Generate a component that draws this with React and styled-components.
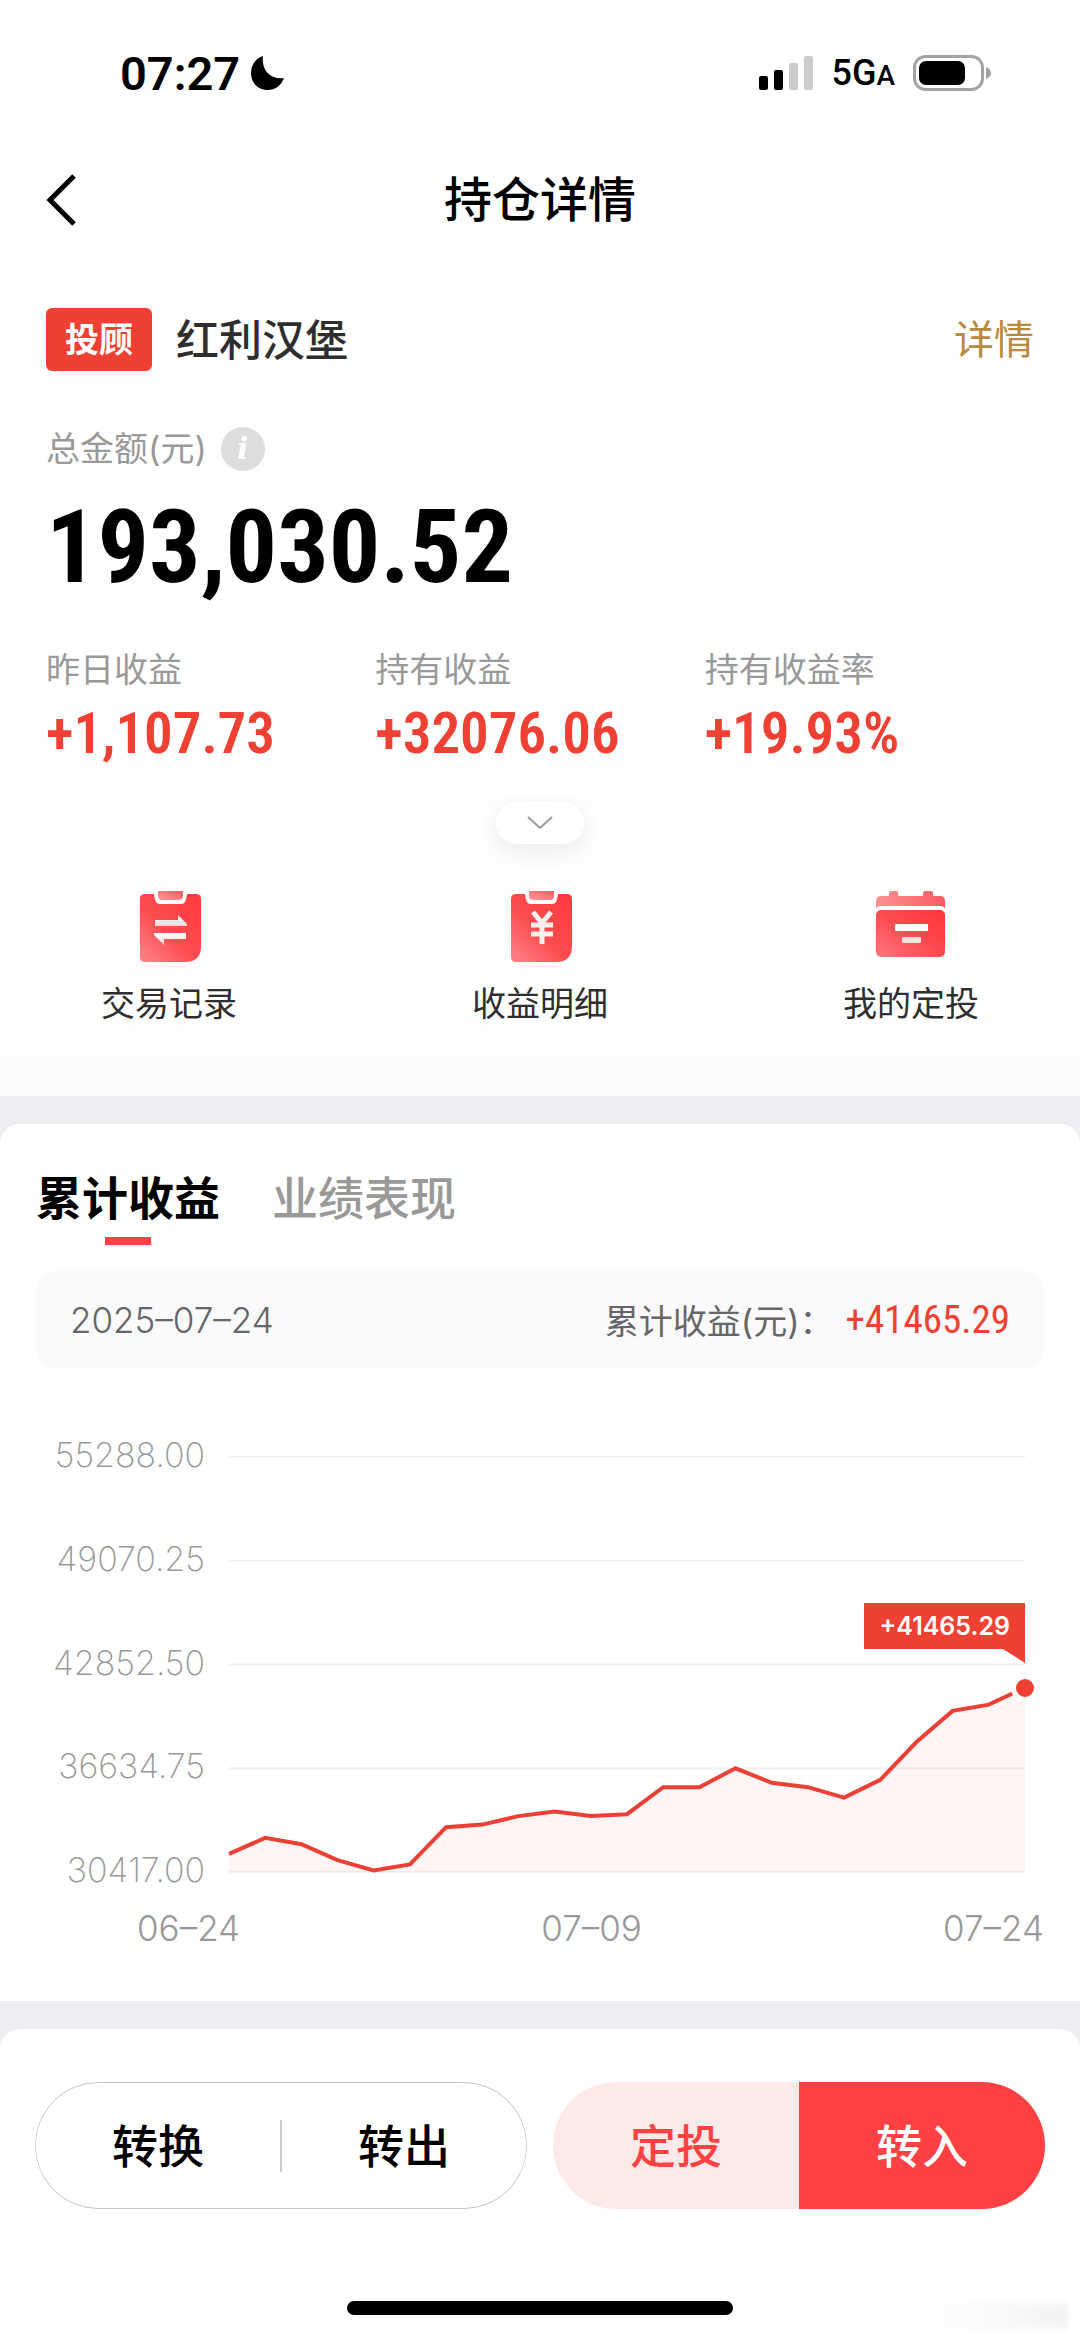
import React from "react";
import styled, { createGlobalStyle } from "styled-components";

const GlobalStyle = createGlobalStyle`
  * {
    box-sizing: border-box;
  }

  body {
    margin: 0;
    background: #eeedf2;
    color: #000;
    font-family: Inter, "Noto Sans CJK SC", sans-serif;
  }

  button {
    padding: 0;
    border: 0;
    background: none;
    color: inherit;
    font: inherit;
    cursor: pointer;
  }
`;

const MAX = 55288;
const MIN = 30417;
const PLOT_WIDTH = 796;
const PLOT_HEIGHT = 415;

const ticks = ["55288.00", "49070.25", "42852.50", "36634.75", "30417.00"];
const dates = ["06–24", "07–09", "07–24"];
const profits = [
  31508, 32461, 32083, 31130, 30512, 30866, 33103, 33259, 33768, 34038, 33768,
  33882, 35501, 35501, 36634, 35765, 35501, 34878, 35945, 38205, 40070, 40448,
  41465.29,
];

const stats = [
  { label: "昨日收益", value: "+1,107.73" },
  { label: "持有收益", value: "+32076.06" },
  { label: "持有收益率", value: "+19.93%" },
];

const toY = (value) => ((MAX - value) / (MAX - MIN)) * PLOT_HEIGHT;

const Clipboard = ({ id, children }) => (
  <svg width="80" height="80" viewBox="0 0 80 80" aria-hidden="true">
    <defs>
      <linearGradient id={id} x1="1" y1="0.1" x2="0.2" y2="1">
        <stop offset="0" stopColor="#fe3b3e" />
        <stop offset="0.6" stopColor="#fd4d51" />
        <stop offset="1" stopColor="#ff7a7f" />
      </linearGradient>
      <linearGradient id={id + "-tab"} x1="1" y1="0" x2="0" y2="1">
        <stop offset="0" stopColor="#fd5a5e" />
        <stop offset="1" stopColor="#ff9a9e" />
      </linearGradient>
      <linearGradient id={id + "-mark"} x1="0" y1="0" x2="0" y2="1">
        <stop offset="0" stopColor="#fff" />
        <stop offset="1" stopColor="#ffd5d6" />
      </linearGradient>
    </defs>
    <path
      d="M16 7H25C26 14 27 17 31 17H52C56 17 57 14 58 7H67Q72 7 72 12V59Q72 75 56 75H16Q11 75 11 70V12Q11 7 16 7Z"
      fill={`url(#${id})`}
    />
    <path d="M29 4H54V9Q54 13 50 13H33Q29 13 29 9Z" fill={`url(#${id}-tab)`} />
    {children}
  </svg>
);

const RecordIcon = () => (
  <Clipboard id="record">
    <path d="M26 33H49V28L58 37V39H26Z" fill="url(#record-mark)" />
    <path d="M25 46H57V52H35V58L25 48Z" fill="url(#record-mark)" />
  </Clipboard>
);

const ProfitIcon = () => (
  <Clipboard id="profit">
    <g stroke="#fff0f0" strokeWidth="5" fill="none">
      <path d="M33 25L42 36L51 25" />
      <path d="M31 38H53M31 47H53M42 36V57" />
    </g>
  </Clipboard>
);

const PlanIcon = () => (
  <svg width="80" height="80" viewBox="0 0 80 80" aria-hidden="true">
    <defs>
      <linearGradient id="plan" x1="1" y1="0" x2="0" y2="1">
        <stop offset="0" stopColor="#fe3538" />
        <stop offset="0.5" stopColor="#fd4b50" />
        <stop offset="1" stopColor="#ff797e" />
      </linearGradient>
      <linearGradient id="plan-top" x1="1" y1="0" x2="0" y2="0">
        <stop offset="0" stopColor="#fc5c61" />
        <stop offset="1" stopColor="#ff9093" />
      </linearGradient>
    </defs>
    <path
      d="M5 22V14Q5 9 10 9H18V6Q18 4 20 4H25Q27 4 27 6V9H52V6Q52 4 54 4H60Q62 4 62 6V9H69Q74 9 74 14V22Q73 19 69 19H10Q6 19 5 22Z"
      fill="url(#plan-top)"
    />
    <rect x="5" y="23" width="69" height="47" rx="5" fill="url(#plan)" />
    <rect x="24" y="37" width="33" height="7" rx="1" fill="#fff" />
    <rect x="31" y="50" width="19" height="6" rx="1" fill="#ffdfe0" />
  </svg>
);

const actions = [
  { label: "交易记录", Icon: RecordIcon },
  { label: "收益明细", Icon: ProfitIcon },
  { label: "我的定投", Icon: PlanIcon },
];

const StatusBar = () => (
  <Status>
    <Clock>
      07:27
      <svg width="36" height="36" viewBox="0 0 36 36" aria-hidden="true">
        <path
          d="M13 1C11 13 19 25 34 23C31 31 25 35 18 35C8 35 1 28 1 18C1 10 6 3 13 1Z"
          fill="#000"
        />
      </svg>
    </Clock>
    <Signals>
      <svg width="54" height="34" viewBox="0 0 54 34" aria-hidden="true">
        <rect x="0" y="20" width="9" height="14" rx="2" />
        <rect x="15" y="14" width="9" height="20" rx="2" />
        <rect x="30" y="7" width="9" height="27" rx="2" fill="#ccc" />
        <rect x="45" y="0" width="9" height="34" rx="2" fill="#ccc" />
      </svg>
      <Network>
        5G<small>A</small>
      </Network>
      <svg width="78" height="36" viewBox="0 0 78 36" aria-hidden="true">
        <rect
          x="1.5"
          y="1.5"
          width="68"
          height="33"
          rx="11"
          fill="none"
          stroke="#a3a3a3"
          strokeWidth="3"
        />
        <rect x="6" y="6" width="46" height="24" rx="7" />
        <path d="M73 12Q78 14 78 18Q78 22 73 24Z" fill="#a3a3a3" />
      </svg>
    </Signals>
  </Status>
);

const Chart = () => {
  const step = PLOT_WIDTH / (profits.length - 1);
  const line = profits
    .map((value, i) => `${(i * step).toFixed(1)},${toY(value).toFixed(1)}`)
    .join(" ");

  return (
    <ChartGrid>
      <YAxis>
        {ticks.map((tick) => (
          <span key={tick}>{tick}</span>
        ))}
      </YAxis>
      <Plot>
        <PlotSvg
          viewBox={`0 0 ${PLOT_WIDTH} ${PLOT_HEIGHT}`}
          preserveAspectRatio="none"
          role="img"
          aria-label="累计收益"
        >
          {ticks.map((tick) => (
            <line
              key={tick}
              x1="0"
              x2={PLOT_WIDTH}
              y1={toY(Number(tick))}
              y2={toY(Number(tick))}
              stroke="#f0f0f1"
              strokeWidth="2"
            />
          ))}
          <polygon
            points={`0,${PLOT_HEIGHT} ${line} ${PLOT_WIDTH},${PLOT_HEIGHT}`}
            fill="#ef4034"
            fillOpacity="0.05"
          />
          <polyline
            points={line}
            fill="none"
            stroke="#ec4036"
            strokeWidth="4"
            vectorEffect="non-scaling-stroke"
          />
        </PlotSvg>
        <Dot style={{ top: toY(profits[profits.length - 1]) }} />
        <Tooltip>+41465.29</Tooltip>
      </Plot>
    </ChartGrid>
  );
};

const App = () => {
  return (
    <Page>
      <GlobalStyle />
      <Summary>
        <StatusBar />
        <NavBar>
          <BackButton aria-label="返回">
            <svg width="32" height="52" viewBox="0 0 32 52" aria-hidden="true">
              <path
                d="M28 2L4 26L28 50"
                fill="none"
                stroke="#000"
                strokeWidth="5"
              />
            </svg>
          </BackButton>
          <Title>持仓详情</Title>
        </NavBar>
        <Product>
          <Tag>投顾</Tag>
          <Name>红利汉堡</Name>
          <DetailLink href="#detail">详情</DetailLink>
        </Product>
        <TotalLabel>
          总金额(元)
          <InfoButton aria-label="说明">i</InfoButton>
        </TotalLabel>
        <Total>193,030.52</Total>
        <Stats>
          {stats.map(({ label, value }) => (
            <div key={label}>
              <StatLabel>{label}</StatLabel>
              <StatValue>{value}</StatValue>
            </div>
          ))}
        </Stats>
        <ExpandButton aria-label="展开">
          <svg width="28" height="16" viewBox="0 0 28 16" aria-hidden="true">
            <path
              d="M2 2L14 13L26 2"
              fill="none"
              stroke="#999"
              strokeWidth="2"
            />
          </svg>
        </ExpandButton>
        <Actions>
          {actions.map(({ label, Icon }) => (
            <ActionButton key={label}>
              <Icon />
              {label}
            </ActionButton>
          ))}
        </Actions>
      </Summary>

      <Performance>
        <Tabs>
          <Tab $active>累计收益</Tab>
          <Tab>业绩表现</Tab>
        </Tabs>
        <Selected>
          <SelectedDate>2025–07–24</SelectedDate>
          <SelectedLabel>累计收益(元)：</SelectedLabel>
          <SelectedValue>+41465.29</SelectedValue>
        </Selected>
        <Chart />
        <XAxis>
          {dates.map((date) => (
            <span key={date}>{date}</span>
          ))}
        </XAxis>
      </Performance>

      <Footer>
        <FooterButtons>
          <OutlinePair>
            <PairButton>转换</PairButton>
            <Divider />
            <PairButton>转出</PairButton>
          </OutlinePair>
          <FilledPair>
            <PairButton $tone="soft">定投</PairButton>
            <PairButton $tone="solid">转入</PairButton>
          </FilledPair>
        </FooterButtons>
        <HomeIndicator />
        <Smudge />
      </Footer>
    </Page>
  );
};

export default App;

const numberFont = `"Roboto Condensed", "Liberation Sans Narrow", Roboto, "Noto Sans CJK SC", sans-serif`;

const Page = styled.div`
  display: flex;
  flex-direction: column;
  gap: 28px;
`;

const Summary = styled.section`
  padding-bottom: 72px;
  background: linear-gradient(#fff, #fff calc(100% - 80px), #fbfbfb);
`;

const Status = styled.div`
  display: flex;
  align-items: center;
  justify-content: space-between;
  height: 146px;
  padding: 0 89px 0 120px;
`;

const Clock = styled.div`
  display: flex;
  align-items: center;
  gap: 10px;
  font-family: Roboto, sans-serif;
  font-size: 47px;
  font-weight: 600;
`;

const Signals = styled.div`
  display: flex;
  align-items: center;
  gap: 18px;
`;

const Network = styled.span`
  font-family: Roboto, sans-serif;
  font-size: 36px;
  font-weight: 500;

  small {
    font-size: 28px;
  }
`;

const NavBar = styled.header`
  display: grid;
  grid-template-columns: 1fr auto 1fr;
  align-items: center;
  height: 107px;
  padding: 0 46px;
`;

const BackButton = styled.button`
  display: flex;
  justify-self: start;
`;

const Title = styled.h1`
  margin: 0;
  font-size: 48px;
  font-weight: 500;
  line-height: 56px;
`;

const Product = styled.div`
  display: flex;
  align-items: center;
  gap: 24px;
  height: 63px;
  margin-top: 55px;
  padding: 0 46px;
`;

const Tag = styled.span`
  padding: 0 19px;
  border-radius: 6px;
  background: #ef4034;
  color: #fff;
  font-size: 34px;
  font-weight: 700;
  line-height: 63px;
`;

const Name = styled.h2`
  margin: 0;
  color: #2e2e2e;
  font-size: 43px;
  font-weight: 500;
  line-height: 56px;
`;

const DetailLink = styled.a`
  margin-left: auto;
  color: #b98941;
  font-size: 40px;
  line-height: 56px;
  text-decoration: none;
`;

const TotalLabel = styled.div`
  display: flex;
  align-items: center;
  gap: 14px;
  margin-top: 56px;
  padding: 0 46px;
  color: #999;
  font-size: 34px;
  line-height: 44px;
`;

const InfoButton = styled.button`
  width: 44px;
  height: 44px;
  border-radius: 50%;
  background: #ddd;
  color: #fff;
  font-family: "DejaVu Serif", serif;
  font-size: 30px;
  font-style: italic;
  font-weight: 700;
  line-height: 44px;
`;

const Total = styled.div`
  margin-top: 26px;
  padding: 0 46px;
  font-family: ${numberFont};
  font-size: 102px;
  font-weight: 700;
  line-height: 100px;
`;

const Stats = styled.div`
  display: grid;
  grid-template-columns: repeat(3, 1fr);
  margin-top: 53px;
  padding: 0 46px;
`;

const StatLabel = styled.div`
  color: #999;
  font-size: 34px;
  line-height: 40px;
`;

const StatValue = styled.div`
  margin-top: 16px;
  color: #ef4034;
  font-family: ${numberFont};
  font-size: 57px;
  font-weight: 600;
  line-height: 56px;
`;

const ExpandButton = styled.button`
  display: flex;
  align-items: center;
  justify-content: center;
  width: 88px;
  height: 42px;
  margin: 40px auto 0;
  border-radius: 21px;
  background: #fff;
  box-shadow: 0 6px 24px rgba(80, 60, 40, 0.12);
`;

const Actions = styled.div`
  display: flex;
  justify-content: space-between;
  margin-top: 43px;
  padding: 0 101px;
`;

const ActionButton = styled.button`
  display: flex;
  flex-direction: column;
  align-items: center;
  gap: 17px;
  color: #2e2e2e;
  font-size: 34px;
  line-height: 40px;
`;

const Performance = styled.section`
  padding: 50px 36px 53px;
  border-radius: 20px 20px 0 0;
  background: #fff;
`;

const Tabs = styled.div`
  display: flex;
  gap: 52px;
`;

const Tab = styled.button`
  display: flex;
  flex-direction: column;
  align-items: center;
  gap: 15px;
  color: ${(props) => (props.$active ? "#000" : "#999")};
  font-size: 46px;
  font-weight: ${(props) => (props.$active ? 700 : 500)};
  line-height: 48px;

  &::after {
    content: "";
    width: 46px;
    height: 8px;
    background: ${(props) => (props.$active ? "#ff4144" : "transparent")};
  }
`;

const Selected = styled.div`
  display: flex;
  align-items: center;
  height: 97px;
  margin-top: 26px;
  padding: 0 34px;
  border-radius: 20px;
  background: #fafafc;
  color: #666;
  font-size: 34px;
`;

const SelectedDate = styled.span`
  font-size: 35px;
  font-weight: 300;
`;

const SelectedLabel = styled.span`
  margin-left: auto;
`;

const SelectedValue = styled.span`
  margin-left: 12px;
  color: #ef4034;
  font-family: ${numberFont};
  font-size: 39px;
`;

const ChartGrid = styled.div`
  display: flex;
  gap: 24px;
  margin-top: 70px;
  padding-right: 19px;
`;

const YAxis = styled.div`
  display: flex;
  flex-direction: column;
  justify-content: space-between;
  width: 169px;
  color: #999;
  font-size: 34px;
  font-weight: 200;
  line-height: 34px;
  text-align: right;
`;

const Plot = styled.div`
  position: relative;
  flex: 1;
  height: 415px;
  margin: 19px 0 15px;
`;

const PlotSvg = styled.svg`
  display: block;
  width: 100%;
  height: 100%;
  overflow: visible;
`;

const Dot = styled.span`
  position: absolute;
  right: -14px;
  width: 28px;
  height: 28px;
  margin-top: -14px;
  border: 5px solid #fff;
  border-radius: 50%;
  background: #ef4034;
`;

const Tooltip = styled.div`
  position: absolute;
  top: 146px;
  right: 0;
  padding: 0 15px;
  background: #ef4034;
  color: #fff;
  font-size: 25px;
  font-weight: 600;
  line-height: 46px;

  &::after {
    content: "";
    position: absolute;
    top: 100%;
    right: 0;
    border-top: 14px solid #ef4034;
    border-left: 22px solid transparent;
  }
`;

const XAxis = styled.div`
  display: flex;
  justify-content: space-between;
  margin-top: 21px;
  padding-left: 101px;
  color: #999;
  font-size: 35px;
  font-weight: 300;
  line-height: 40px;
`;

const Footer = styled.footer`
  position: relative;
  padding: 53px 35px 24px;
  border-radius: 20px 20px 0 0;
  background: #fff;
`;

const FooterButtons = styled.div`
  display: grid;
  grid-template-columns: 1fr 1fr;
  gap: 26px;
`;

const Pair = styled.div`
  display: flex;
  align-items: center;
  height: 127px;
  border-radius: 64px;
  overflow: hidden;
`;

const OutlinePair = styled(Pair)`
  border: 1px solid #c4c4c4;
`;

const FilledPair = styled(Pair)`
  align-items: stretch;
`;

const PairButton = styled.button`
  flex: 1;
  background: ${({ $tone }) =>
    $tone === "solid" ? "#ff4144" : $tone === "soft" ? "#fceae8" : "#fff"};
  color: ${({ $tone }) =>
    $tone === "solid" ? "#fff" : $tone === "soft" ? "#ff4144" : "#000"};
  font-size: 46px;
  font-weight: 500;
  line-height: 56px;
`;

const Divider = styled.span`
  width: 2px;
  height: 52px;
  background: #ccc;
`;

const HomeIndicator = styled.div`
  width: 386px;
  height: 14px;
  margin: 92px auto 0;
  border-radius: 7px;
  background: #000;
`;

const Smudge = styled.div`
  position: absolute;
  right: 12px;
  bottom: 10px;
  width: 176px;
  height: 26px;
  background: linear-gradient(90deg, #fff, #fafafa 60%, #f2f2f2);
  filter: blur(3px);
`;
